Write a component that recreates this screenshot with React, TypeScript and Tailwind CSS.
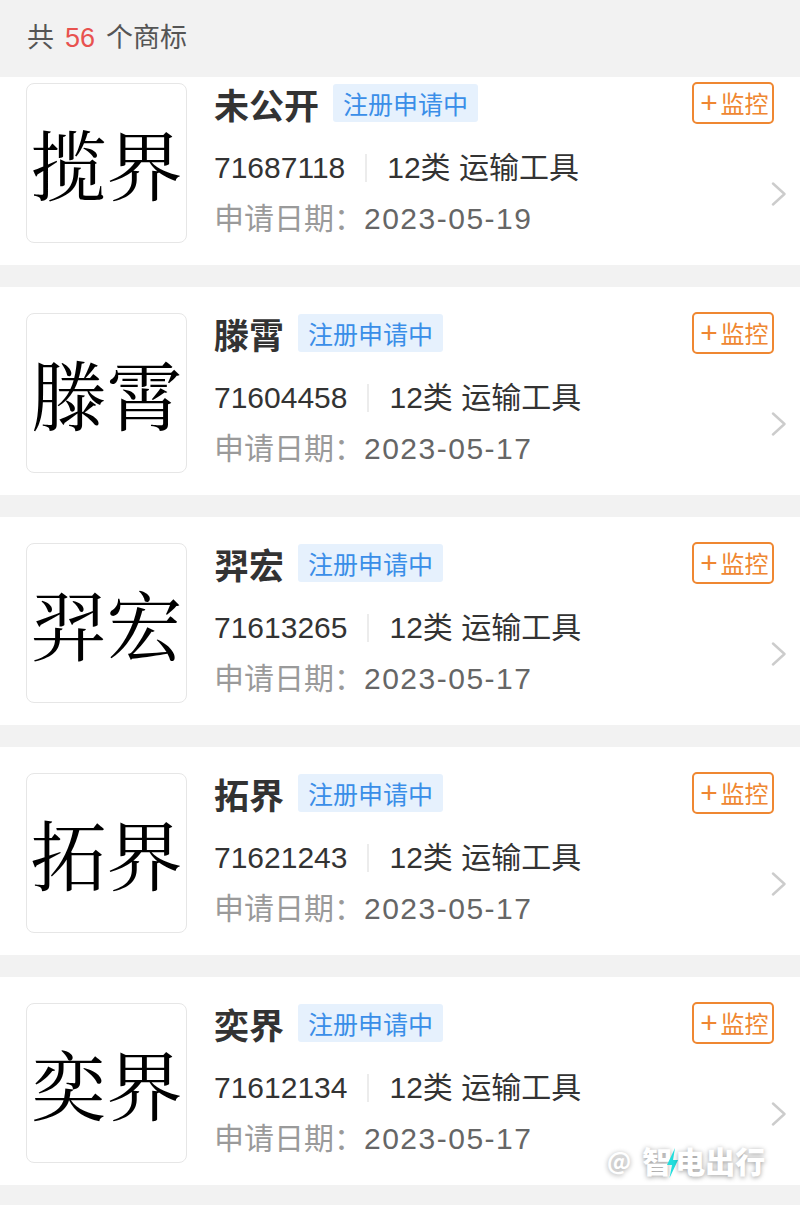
import React from "react";

type Mark = {
  thumb: string;
  title: string;
  regNo: string;
  date: string;
};

const MARKS: Mark[] = [
  { thumb: "揽界", title: "未公开", regNo: "71687118", date: "2023-05-19" },
  { thumb: "滕霄", title: "滕霄", regNo: "71604458", date: "2023-05-17" },
  { thumb: "羿宏", title: "羿宏", regNo: "71613265", date: "2023-05-17" },
  { thumb: "拓界", title: "拓界", regNo: "71621243", date: "2023-05-17" },
  { thumb: "奕界", title: "奕界", regNo: "71612134", date: "2023-05-17" },
];

const SANS = "font-['Liberation_Sans','Noto_Sans_CJK_SC',sans-serif]";

function Chevron() {
  return (
    <svg width="16" height="24" viewBox="0 0 16 24" fill="none">
      <path d="M2 1.5L13.5 12L2 22.5" stroke="#cccccc" strokeWidth="2.4" strokeLinecap="round" strokeLinejoin="round" />
    </svg>
  );
}

function Bolt() {
  return (
    <svg width="13" height="30" viewBox="0 0 13 30" fill="none">
      <path d="M9 0L1 17H6L3.5 30L12 12H7L9 0Z" fill="#22dede" />
    </svg>
  );
}

/* ── one trademark row ── */
function MarkCard({ mark }: { mark: Mark }) {
  return (
    <div className="flex bg-white pt-[25px] pb-[22px] pl-[26px] pr-[13px]">
      <div className="mt-[1px] flex h-[160px] w-[161px] shrink-0 items-center justify-center overflow-hidden rounded-[8px] border border-[#e6e6e6] bg-white">
        <span className="whitespace-nowrap text-[76px] leading-none text-black font-['Noto_Serif_CJK_SC','Noto_Sans_CJK_SC',serif]">
          {mark.thumb}
        </span>
      </div>

      <div className="ml-[27px] flex flex-1 flex-col">
        <div className="flex h-[42px] items-center pr-[13px]">
          <span className="text-[35px] font-bold leading-none text-[#333333] font-['Noto_Sans_CJK_SC',sans-serif]">
            {mark.title}
          </span>
          <span className="ml-[14px] flex h-[38px] items-center rounded-[3px] bg-[#e6f1fd] px-[10px] text-[25px] leading-none text-[#3a8ee8] font-['Noto_Sans_CJK_SC',sans-serif]">
            注册申请中
          </span>
          <button
            type="button"
            className="ml-auto flex h-[42px] w-[82px] items-center justify-center rounded-[5px] border-2 border-[#ef8731] text-[24px] leading-none text-[#ef8731] font-['Noto_Sans_CJK_SC',sans-serif]"
          >
            <span className="w-[23px] text-center text-[30px] font-light leading-none font-['Liberation_Sans',sans-serif]">+</span>
            <span>监控</span>
          </button>
        </div>

        <div className="flex items-center">
          <div className="flex flex-1 flex-col">
            <div className={`mt-[24px] flex h-[40px] items-center text-[30px] leading-none text-[#333333] ${SANS}`}>
              <span>{mark.regNo}</span>
              <span className="mx-[20px] h-[28px] w-[2px] bg-[#ececec]" />
              <span>12类 运输工具</span>
            </div>
            <div className={`mt-[11px] flex h-[40px] items-center text-[30px] leading-none ${SANS}`}>
              <span className="text-[#9a9a9a]">申请日期：</span>
              <span className="tracking-[1.5px] text-[#666666]">{mark.date}</span>
            </div>
          </div>
          <div className="mt-[25px] flex w-[16px] shrink-0 items-center justify-center">
            <Chevron />
          </div>
        </div>
      </div>
    </div>
  );
}

export default function App() {
  return (
    <div className="relative min-h-[1205px] w-[800px] bg-[#f2f2f2]">
      {/* ── header ── */}
      <div className={`flex h-[77px] items-center pl-[27px] text-[27px] text-[#555555] ${SANS}`}>
        <span>共</span>
        <span className="mx-[11px] text-[#e8524f]">56</span>
        <span>个商标</span>
      </div>

      {/* ── list (first card scrolled partly under the header) ── */}
      <div className="overflow-hidden">
        <div className="-mt-[20px] flex flex-col gap-[22px]">
          {MARKS.map((m) => (
            <MarkCard key={m.regNo} mark={m} />
          ))}
        </div>
      </div>

      {/* ── watermark ── */}
      <div className="absolute left-[607px] top-[1142px] flex items-center text-white [text-shadow:0_1px_5px_rgba(0,0,0,0.4)] font-['Noto_Sans_CJK_SC',sans-serif]">
        <span className="mr-[11px] text-[24px] font-bold leading-none">@</span>
        <span className="text-[30px] font-black leading-none">智</span>
        <span className="-ml-[6px] -mr-[4px] mt-[6px]">
          <Bolt />
        </span>
        <span className="text-[30px] font-black leading-none">电出行</span>
      </div>
    </div>
  );
}
